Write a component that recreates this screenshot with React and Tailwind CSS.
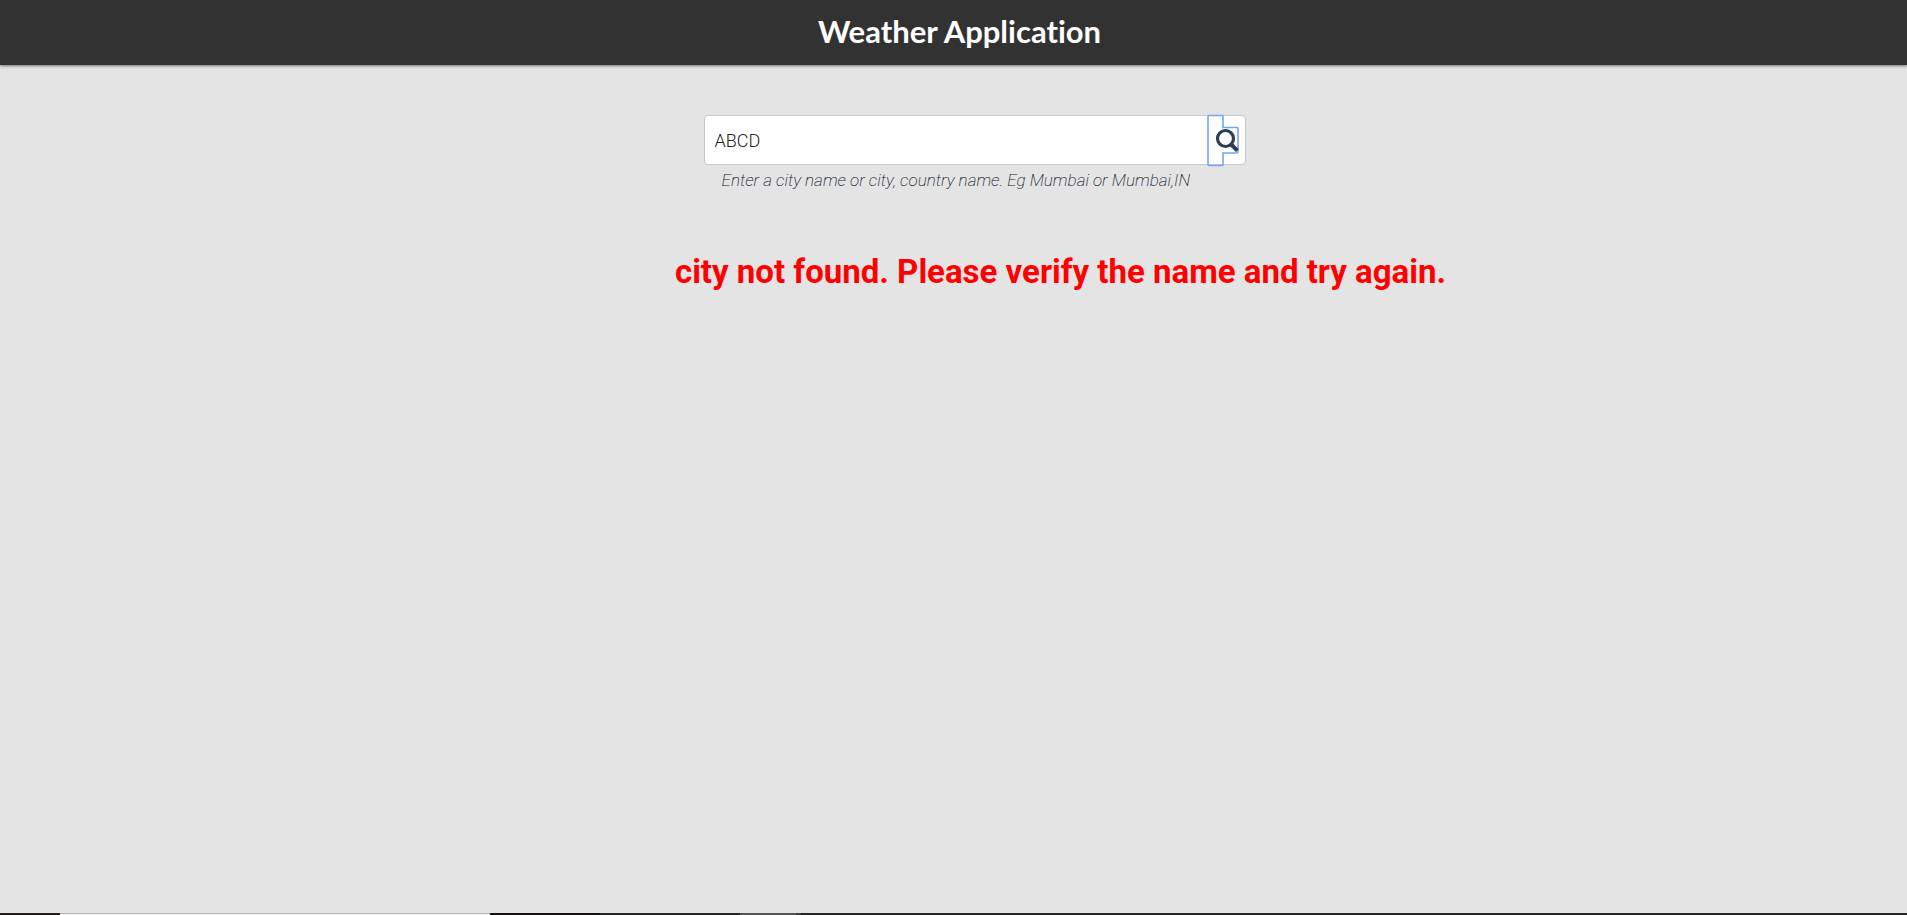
import { useState } from "react";

function FocusRing() {
  return (
    <svg className="absolute inset-0" width="34" height="54" viewBox="0 0 34 54" fill="none" aria-hidden="true">
      <path
        d="M2 1.5H15Q16 1.5 16 2.5V13.5H30Q31 13.5 31 14.5V38Q31 39 30 39H16V50.5Q16 51.5 15 51.5H2Q1 51.5 1 50.5V2.5Q1 1.5 2 1.5Z"
        stroke="#70a5f7"
        strokeWidth="1.6"
      />
    </svg>
  );
}

function SearchIcon() {
  return (
    <svg className="absolute left-2 top-3.5" width="24" height="24" viewBox="0 0 24 24" fill="none" aria-hidden="true">
      <circle cx="10.5" cy="10.5" r="8" stroke="#2c3e50" strokeWidth="3.2" />
      <path d="M16 16.3L22.4 22.6" stroke="#2c3e50" strokeWidth="4" />
    </svg>
  );
}

export default function App() {
  const [city, setCity] = useState("ABCD");
  return (
    <div className="flex min-h-screen flex-col bg-[#e4e4e4] font-[Roboto,sans-serif]">
      <header className="flex h-[65px] items-center justify-center bg-[#323232] pb-1 pl-3 shadow-[0_1px_3px_rgba(0,0,0,0.5)]">
        <h1 className="font-[Lato,sans-serif] text-[31px] leading-9 font-bold text-white [font-variant-ligatures:none]">
          Weather Application
        </h1>
      </header>

      <main className="flex grow flex-col items-center pt-[50px]">
        <form className="w-full max-w-[584px] pl-[42px]" onSubmit={(e) => e.preventDefault()}>
          <div className="flex h-[50px] rounded-[4px] border border-[#c8c8c8] bg-white">
            <input
              id="city"
              aria-label="City"
              aria-describedby="hint"
              className="min-w-0 grow bg-transparent pl-2.5 text-[18px] font-light text-[#222222] outline-none"
              value={city}
              onChange={(e) => setCity(e.target.value)}
            />
            <button type="submit" aria-label="Search" className="relative -mt-0.5 mr-1 h-[54px] w-[34px] outline-none">
              <FocusRing />
              <SearchIcon />
            </button>
          </div>
          <p id="hint" className="pt-[3px] pl-[18px] text-[17px] leading-6 font-extralight whitespace-nowrap text-[#12202f] italic">
            Enter a city name or city, country name. Eg Mumbai or Mumbai,IN
          </p>
        </form>
        <h2 role="alert" className="mt-[60px] pl-[214px] text-[33px] leading-10 font-bold text-[#ff0000]">
          city not found. Please verify the name and try again.
        </h2>
      </main>

      <footer className="flex h-0.5 bg-[#262626]">
        <div className="w-[60px] bg-[#211c1c]" />
        <div className="w-[430px] border-t border-[#b8b8b8] bg-[#f2f2f2]" />
        <div className="w-[110px] bg-[#121011]" />
        <div className="w-[140px]" />
        <div className="w-[56px] bg-[#555555]" />
        <div className="w-[5px] bg-[#3c3c3c]" />
      </footer>
    </div>
  );
}
